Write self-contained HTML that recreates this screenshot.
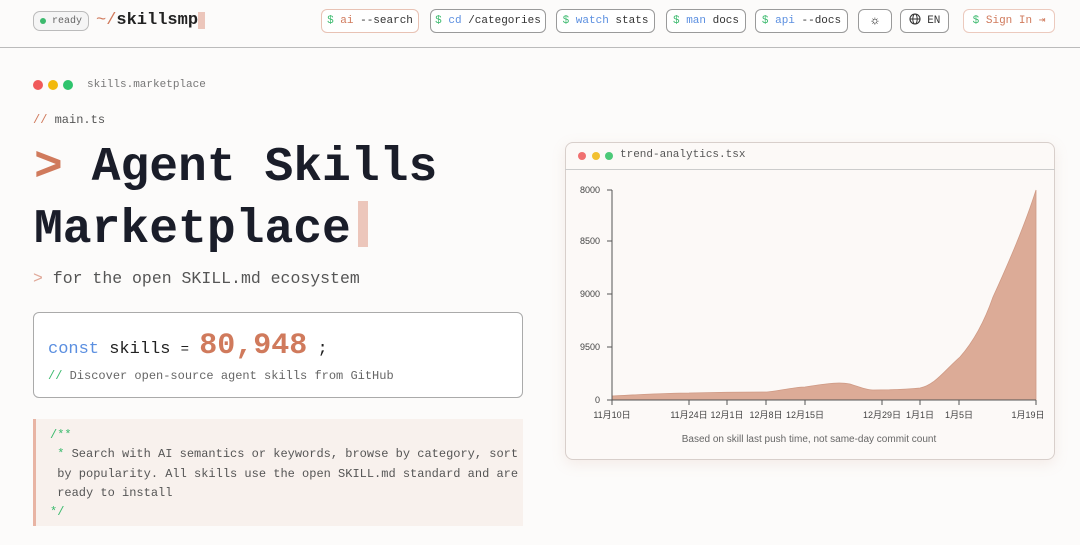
<!DOCTYPE html>
<html><head><meta charset="utf-8"><style>
*{margin:0;padding:0;box-sizing:border-box}
body{width:1080px;height:545px;overflow:hidden;background:#fcfbfa;font-family:"Liberation Mono","Noto Sans CJK SC",monospace;color:#222;position:relative}
.a{position:absolute;white-space:nowrap}
.btn{position:absolute;top:9px;height:24px;border:1px solid #9a9a9a;border-radius:6px;font-size:11px;line-height:22px;text-align:center;color:#333;background:#fff}
.g{color:#3cba6e}.b{color:#5b8fe0}.o{color:#d07a5c}
</style></head><body>
<div class="a" style="left:0;top:47px;width:1080px;height:1px;background:#bbb"></div>
<div class="a" style="left:33px;top:11px;width:56px;height:20px;border:1px solid #bbb;border-radius:7px;background:#f5f5f5;font-size:10px;line-height:19px;color:#666;padding-left:18px">ready</div>
<div class="a" style="left:40px;top:18px;width:6px;height:6px;border-radius:50%;background:#3cba6e"></div>
<div class="a" style="left:96px;top:8px;font-size:17px;font-weight:bold;color:#222;line-height:26px"><span class="o" style="font-weight:normal">~/</span>skillsmp</div>
<div class="a" style="left:198px;top:12px;width:7px;height:17px;background:#ecc6bb"></div>
<div class="btn" style="left:321px;width:98px;border-color:#e8c2b4"><span class="g">$</span> <span class="o">ai</span> --search</div>
<div class="btn" style="left:430px;width:116px"><span class="g">$</span> <span class="b">cd</span> /categories</div>
<div class="btn" style="left:556px;width:99px"><span class="g">$</span> <span class="b">watch</span> stats</div>
<div class="btn" style="left:666px;width:80px"><span class="g">$</span> <span class="b">man</span> docs</div>
<div class="btn" style="left:755px;width:93px"><span class="g">$</span> <span class="b">api</span> --docs</div>
<div class="btn" style="left:858px;width:34px;font-size:13px">☼</div>
<div class="btn" style="left:900px;width:49px">
<svg width="12" height="12" viewBox="0 0 12 12" style="vertical-align:-2px"><circle cx="6" cy="6" r="5" fill="none" stroke="#333" stroke-width="1.1"/><ellipse cx="6" cy="6" rx="2.2" ry="5" fill="none" stroke="#333" stroke-width="1"/><path d="M1 6h10" stroke="#333"/></svg> EN</div>
<div class="btn" style="left:963px;width:92px;border-color:#eccabe;color:#d07a5c"><span class="g">$</span> Sign In ⇥</div>

<div class="a" style="left:33px;top:80px;width:10px;height:10px;border-radius:50%;background:#f05a5a"></div>
<div class="a" style="left:48px;top:80px;width:10px;height:10px;border-radius:50%;background:#f2b90c"></div>
<div class="a" style="left:63px;top:80px;width:10px;height:10px;border-radius:50%;background:#2fc46d"></div>
<div class="a" style="left:87px;top:78px;font-size:11px;color:#777;line-height:14px">skills.marketplace</div>
<div class="a" style="left:33px;top:113px;font-size:12px;color:#555;line-height:14px"><span class="o">//</span> main.ts</div>
<div class="a" style="left:34px;top:140px;font-size:48px;font-weight:bold;color:#1a1d29;line-height:56px"><span class="o">&gt;</span> Agent Skills</div>
<div class="a" style="left:34px;top:202px;font-size:48px;font-weight:bold;color:#1a1d29;line-height:56px">Marketplace</div>
<div class="a" style="left:358px;top:201px;width:10px;height:46px;background:#ecc6bb"></div>
<div class="a" style="left:33px;top:269px;font-size:16.5px;color:#555;line-height:20px"><span style="color:#e0a898">&gt;</span> for the open SKILL.md ecosystem</div>

<div class="a" style="left:33px;top:312px;width:490px;height:86px;border:1px solid #aaa;border-radius:6px;background:#fff"></div>
<div class="a" style="left:48px;top:324px;font-size:17px;line-height:44px;color:#222"><span class="b">const</span> skills <span style="font-size:14px">=</span> <span class="o" style="font-size:30px;font-weight:bold">80,948</span> ;</div>
<div class="a" style="left:48px;top:369px;font-size:12px;color:#666;line-height:14px"><span class="g">//</span> Discover open-source agent skills from GitHub</div>

<div class="a" style="left:33px;top:419px;width:490px;height:107px;background:#f8f1ed;border-left:3px solid #e8b4a4"></div>
<div class="a" style="left:50px;top:426px;font-size:12px;line-height:19.3px;color:#555"><span class="g">/**</span><br>&nbsp;<span class="g">*</span> Search with AI semantics or keywords, browse by category, sort<br>&nbsp;by popularity. All skills use the open SKILL.md standard and are<br>&nbsp;ready to install<br><span class="g">*/</span></div>

<div class="a" style="left:565px;top:142px;width:490px;height:318px;border:1px solid #d8cfcb;border-radius:8px;background:#fcf9f7;box-shadow:0 4px 14px rgba(200,150,130,.15)"></div>
<div class="a" style="left:565px;top:169px;width:490px;height:1px;background:#ccc"></div>
<div class="a" style="left:578px;top:152px;width:8px;height:8px;border-radius:50%;background:#f07070"></div>
<div class="a" style="left:592px;top:152px;width:8px;height:8px;border-radius:50%;background:#f2c030"></div>
<div class="a" style="left:605px;top:152px;width:8px;height:8px;border-radius:50%;background:#4cc978"></div>
<div class="a" style="left:620px;top:149px;font-size:11px;color:#555;line-height:13px">trend-analytics.tsx</div>
<svg class="a" style="left:0;top:0" width="1080" height="545" font-family="Liberation Sans,Noto Sans CJK SC,sans-serif" font-size="9" fill="#444">
<path d="M612 396 C650 394 670 393 689 393 C730 392 750 392 767 392 C785 390 795 387 805 387 C830 383 840 382 850 384 C862 388 868 390 873 390 C900 390 910 389 920 388 C935 385 945 370 960 357 C975 340 985 320 993 297 C1010 260 1025 225 1036 190 L1036 400 L612 400Z" fill="#dcab97" stroke="#cf9a85" stroke-width="0.8"/>
<path d="M612 190V400H1036" fill="none" stroke="#555" stroke-width="1"/>
<g stroke="#555"><path d="M607 190h5M607 241h5M607 294h5M607 347h5M607 400h5"/>
<path d="M612 400v5M689 400v5M727 400v5M766 400v5M805 400v5M882 400v5M920 400v5M959 400v5M1036 400v5"/></g>
<g text-anchor="end"><text x="600" y="193">8000</text><text x="600" y="244">8500</text><text x="600" y="297">9000</text><text x="600" y="350">9500</text><text x="600" y="403">0</text></g>
<g text-anchor="middle"><text x="612" y="418">11月10日</text><text x="689" y="418">11月24日</text><text x="727" y="418">12月1日</text><text x="766" y="418">12月8日</text><text x="805" y="418">12月15日</text><text x="882" y="418">12月29日</text><text x="920" y="418">1月1日</text><text x="959" y="418">1月5日</text><text x="1028" y="418">1月19日</text>
<text x="809" y="442" font-size="10" fill="#666">Based on skill last push time, not same-day commit count</text></g>
</svg>
</body></html>
